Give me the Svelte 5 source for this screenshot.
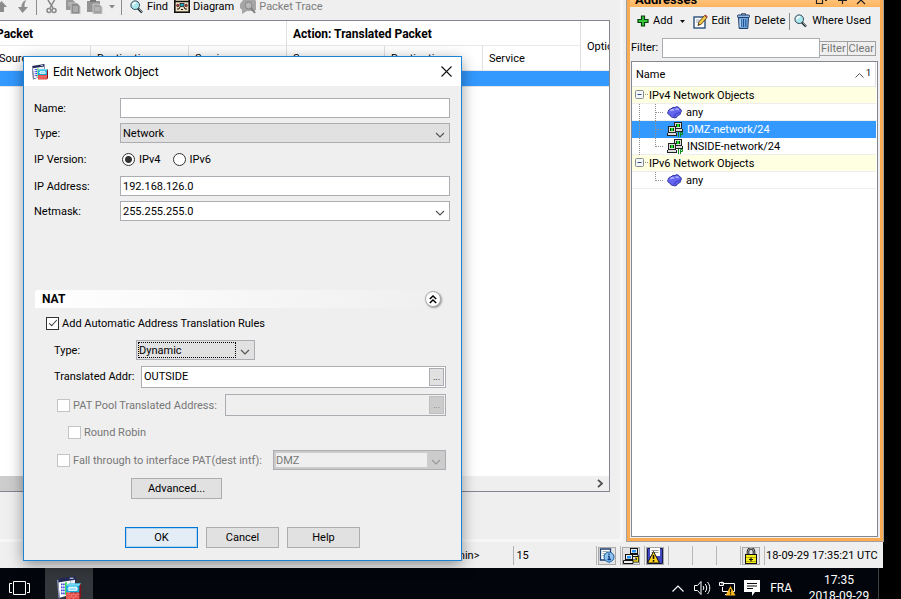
<script>
  let name = $state('');
  let version = $state('4');
  let address = $state('192.168.126.0');
  let autoNat = $state(true);
  let translated = $state('OUTSIDE');

  const tree = [
    { kind: 'group', label: 'IPv4 Network Objects' },
    { kind: 'any', label: 'any', outer: true },
    { kind: 'net', label: 'DMZ-network/24', outer: true, selected: true },
    { kind: 'net', label: 'INSIDE-network/24', outer: true, last: true },
    { kind: 'group', label: 'IPv6 Network Objects' },
    { kind: 'any', label: 'any', last: true }
  ];
</script>

{#snippet asdm(size)}
  <svg width={size} height={size} viewBox="0 0 16 16" aria-hidden="true">
    <path d="M0 2 12.500 0v11L1 15.500Z" fill="#232a55" />
    <path d="M.9 4.300 9 3v9.500L1.800 14.500Z" fill="#fff" />
    <path d="M9 3l3-.5V6H9Z" fill="#e9ecf5" />
    <path d="M0 2.500h.9L1.800 15H1Z" fill="#8d97b5" />
    <path d="M3.200 5v8M4.600 5v7.500" stroke="#2a36e0" stroke-width="1" stroke-dasharray="1.200 .8" />
    <path d="M6 4.200v8.500" stroke="#38d84a" stroke-width="1.200" />
    <path d="M8.500 1.500h2.500" stroke="#c9d0ee" stroke-width=".8" />
    <path d="M6 6.500 8 5h8l-1 1.500V11H6Z" fill="#19a9dc" />
    <path d="M6 6.500 8 5h8l-1 1.500Z" fill="#6fd9f4" />
    <path d="M8 7.500h5v2H8Z" fill="none" stroke="#d6f6ff" stroke-width=".9" />
    <path d="M7 8.500h7" stroke="#d6f6ff" stroke-width=".7" />
    <path d="M6 11h9v4.500H6Z" fill="#e2403a" />
    <path d="M15 6.500 16 5v9l-1 1.500Z" fill="#8c1117" />
    <path d="M6 12.500h9M6 14h9M8 11v1.500M11 11v1.500M14 11v1.500M9.500 12.500V14M12.500 12.500V14M8 14v1.500M11 14v1.500" stroke="#f5a09a" stroke-width=".4" />
  </svg>
{/snippet}

{#snippet magnifier()}
  <svg width="14" height="14" viewBox="0 0 14 14" aria-hidden="true">
    <path d="M8 8.500 12 12.500" stroke="#1d2b30" stroke-width="2.400" />
    <path d="M9 9 12 12" stroke="#8fa3a8" stroke-width="1" />
    <circle cx="5.200" cy="5.200" r="4.300" fill="#a9e9ee" stroke="#345" stroke-width="1" />
    <path d="M2.800 5.500A2.600 2.600 0 0 1 6 2.800" fill="none" stroke="#fff" stroke-width="1.600" />
  </svg>
{/snippet}

{#snippet chevron()}
  <svg class="chev" width="10" height="6" viewBox="0 0 10 6" aria-hidden="true">
    <path d="M1 1l4 4 4-4" fill="none" stroke="currentColor" stroke-width="1.200" />
  </svg>
{/snippet}

<div class="screen">
  <div class="app">
    <div class="body">
      <main class="main">
        <div class="toolbar">
          <svg width="8" height="14" viewBox="0 0 8 14"><path d="M-4 7 1.500 1 7 7H4v5H0V7Z" fill="#8c8c8c" /></svg>
          <svg class="down" width="14" height="14" viewBox="0 0 14 14"><path d="M9.500 0C7.500 2 7.500 4 7.500 7H11L5.500 13 1 7h3.500C4.500 4 6 1 9.500 0Z" fill="#8c8c8c" /></svg>
          <i class="sep s1"></i>
          <svg width="12" height="14" viewBox="0 0 12 14"><path d="M2 0l5 8M8.500 0 4 8" stroke="#888" stroke-width="1.500" /><circle cx="3" cy="10.500" r="2" fill="none" stroke="#888" stroke-width="1.500" /><circle cx="8" cy="10.500" r="2" fill="none" stroke="#888" stroke-width="1.500" /></svg>
          <svg class="copy" width="16" height="14" viewBox="0 0 16 14"><path d="M1 0h7l2 2v8H1Z" fill="#999" /><path d="M6 3h6l3 3v8H6Z" fill="#8c8c8c" stroke="#c8c8c8" /><path d="M8 7h5M8 9h5M8 11h5M3 3h3M3 5h2" stroke="#c8c8c8" /></svg>
          <svg class="paste" width="16" height="14" viewBox="0 0 16 14"><path d="M0 1h13v11H0Z" fill="#949494" /><path d="M3 0h6v2H3Z" fill="#777" /><path d="M6 4h6l3 3v7H6Z" fill="#a2a2a2" stroke="#c8c8c8" /><path d="M8 8h5M8 10h5" stroke="#c8c8c8" /></svg>
          <svg class="drop" width="6" height="4" viewBox="0 0 6 4"><path d="M0 0h6L3 3.500Z" fill="#888" /></svg>
          <i class="sep s2"></i>
          <button class="tool">{@render magnifier()}<span>Find</span></button>
          <button class="tool">
            <svg width="16" height="14" viewBox="0 0 16 14"><rect x=".8" y="-1" width="14.400" height="13.200" fill="#f3e3c3" stroke="#111" stroke-width="1.600" /><path d="M1 1.500h14" stroke="#111" stroke-width="1.500" /><rect x="6" y="3.500" width="4" height="3" fill="#28a9c9" stroke="#111" stroke-width=".7" /><circle cx="3.800" cy="5.500" r="1.200" fill="#c33" stroke="#111" stroke-width=".6" /><circle cx="12.200" cy="5.500" r="1.200" fill="#c33" stroke="#111" stroke-width=".6" /><path d="M3 9h2l1-2M13 9h-2l-1-2M7 9.500h2" stroke="#111" fill="none" /></svg>
            <span>Diagram</span>
          </button>
          <button class="tool off" disabled>
            <svg width="16" height="14" viewBox="0 0 16 14"><path d="M3 0h12l1 1v9l-2 1H7l-5 3v-4L0 8V4Z" fill="#a6a6a6" /><circle cx="8.500" cy="5.500" r="3.500" fill="#b8b8b8" stroke="#868686" /><path d="M11 8l4 5" stroke="#7d7d7d" stroke-width="2" /></svg>
            <span>Packet Trace</span>
          </button>
        </div>
        <div class="rules">
          <table>
            <colgroup><col /><col /><col /><col /><col /><col /><col class="opt" /></colgroup>
            <thead>
              <tr class="groups"><th class="orig" colspan="3">Packet</th><th colspan="3">Action: Translated Packet</th><td class="options" rowspan="2">Options</td></tr>
              <tr class="cols"><td>Source</td><td>Destination</td><td>Service</td><td>Source</td><td>Destination</td><td>Service</td></tr>
            </thead>
            <tbody><tr class="picked"><td colspan="7"></td></tr></tbody>
          </table>
          <div class="scroll">
            <i></i>
            <svg width="7" height="9" viewBox="0 0 7 9"><path d="M1 .8 5 4.500 1 8.200" fill="none" stroke="#505050" stroke-width="1.800" /></svg>
          </div>
        </div>
      </main>

      <aside class="side">
        <header>
          <b>Addresses</b>
          <svg width="60" height="7" viewBox="0 0 60 7"><path d="M6.500 0v3.500h6V0M15 .5h2M28 .5h9M32.500 0v4M47 4l4-4 4 4" fill="none" stroke="#222" stroke-width="1.200" /></svg>
        </header>
        <div class="tools">
          <button class="tool">
            <svg width="12" height="12" viewBox="0 0 12 12"><path d="M4.500 1h3v3.500H11v3H7.500V11h-3V7.500H1v-3h3.500Z" fill="#35c83c" stroke="#0a3f10" stroke-width="1.200" /></svg>
            <span>Add</span>
            <svg class="tri" width="5" height="3" viewBox="0 0 5 3"><path d="M0 0h5L2.500 3Z" fill="#111" /></svg>
          </button>
          <button class="tool edit">
            <svg width="15" height="15" viewBox="0 0 15 15"><rect x="1" y="3" width="11" height="11" fill="#fff" stroke="#2c4f7c" stroke-width="1.400" /><path d="M3 6h4M3 8h3" stroke="#9ab" /><path d="M5 11.500 5.800 8 11.500 1.500 14 3.500 8.500 10Z" fill="#f2c94c" stroke="#5a3b12" stroke-width=".9" /><path d="M11.500 1.500 12.500.5 14.700 2.500 14 3.500Z" fill="#b43" /><path d="M5 11.500l1-1.500.8.700Z" fill="#222" /></svg>
            <span>Edit</span>
          </button>
          <button class="tool del">
            <svg width="13" height="16" viewBox="0 0 13 16"><path d="M4.500 2V.8h4V2" fill="none" stroke="#223b66" /><rect x=".5" y="2" width="12" height="2.500" rx=".8" fill="#8fbce8" stroke="#223b66" /><path d="M1.500 4.500h10l-.7 11H2.200Z" fill="#6fa8e0" stroke="#223b66" /><path d="M4.200 6v8M6.500 6v8M8.800 6v8" stroke="#24508c" /><path d="M3.200 6v8" stroke="#d6eaff" /></svg>
            <span>Delete</span>
          </button>
          <i class="sep"></i>
          <button class="tool where">{@render magnifier()}<span>Where Used</span></button>
        </div>
        <div class="filter">
          <label for="filter">Filter:</label>
          <input id="filter" type="text" />
          <button disabled>Filter</button><button disabled>Clear</button>
        </div>
        <div class="tree">
          <div class="head">
            <span>Name</span>
            <svg width="9" height="5" viewBox="0 0 9 5"><path d="M.5 4.500l4-4 4 4" fill="none" stroke="#555" /></svg>
            <sup>1</sup>
          </div>
          {#each tree as row}
            <div class="node {row.kind}" class:selected={row.selected}>
              {#if row.kind === 'group'}
                <svg width="17" height="17" viewBox="0 0 17 17">
                  <rect x="3.500" y="3.500" width="8" height="8" rx="1" fill="#f4f6f8" stroke="#848b94" />
                  <path d="M5.500 7.500h4" stroke="#2f4d94" />
                  <path d="M13 7.500h4" stroke="#909090" stroke-dasharray="1 1" />
                </svg>
              {:else}
                <svg width="33" height="17" viewBox="0 0 33 17">
                  {#if row.outer}<path d="M7.500 0v17" stroke="#909090" stroke-dasharray="1 1" />{/if}
                  <path d={row.last ? 'M23.5 0v9' : 'M23.5 0v17'} stroke="#909090" stroke-dasharray="1 1" />
                  <path d="M24 8.500h8" stroke="#909090" stroke-dasharray="1 1" />
                </svg>
                {#if row.kind === 'any'}
                  <svg class="ico" width="15" height="13" viewBox="0 0 15 13">
                    <path d="M4 3C5.500 1 7 1.500 8 1.500 9 .3 12 .5 12.300 2.500 14.500 3 15 5.500 13.500 6.800 13.500 9 11.500 9.500 10.800 9.500 10 11.500 8 12.500 6.500 11.500 4.500 11.500 3.500 10.500 3 9 .5 8.500 0 6 1.500 5 1.500 3.500 3 3 4 3Z" fill="#6466f0" stroke="#2b2c9c" />
                    <path d="M3.500 5C4.500 3.500 6 3.500 7 4.500M8.500 3.500C9.500 2.500 11 2.800 11.300 4" fill="none" stroke="#b9bbff" stroke-width="1.400" />
                    <path d="M6.500 10.500c2-1 1.500-2.500 3-3s2.500 0 3-1.500" fill="none" stroke="#4142c8" stroke-width="1.200" />
                  </svg>
                {:else}
                  <svg class="ico" width="16" height="15" viewBox="0 0 16 15">
                    <path d="M7 0h8v7H7Z" fill="#222" /><path d="M8 1h6v5H8Z" fill="#dcdcdc" /><path d="M9 2h4v3H9Z" fill="#063d0a" /><path d="M10 2h2v3h-2Z" fill="#20e02a" />
                    <path d="M7 7h9v3H7Z" fill="#222" /><path d="M8 7h7v2H8Z" fill="#dcdcdc" />
                    <path d="M1 4h8v7H1Z" fill="#222" /><path d="M2 5h6v5H2Z" fill="#dcdcdc" /><path d="M3 6h4v3H3Z" fill="#063d0a" /><path d="M4 6h2v3H4Z" fill="#20e02a" />
                    <path d="M0 11h10v3H0Z" fill="#222" /><path d="M1 11h8v2H1Z" fill="#dcdcdc" />
                    <path d="M11.500 10v5M13.500 15v-4.500h2v2h-2" fill="none" stroke="#0c8a1a" />
                  </svg>
                {/if}
              {/if}
              <span>{row.label}</span>
            </div>
          {/each}
        </div>
      </aside>
    </div>

    <footer class="status">
      <span class="user">&lt;admin&gt;</span>
      <span class="level">15</span>
      <span class="slot"><i class="box"><svg width="16" height="16" viewBox="0 0 16 16"><path d="M1.500 1h10v11h-10Z" fill="#fff" stroke="#1c3f6e" stroke-width="1.300" /><path d="M3.500 3.500h5M3.500 5.500h4M3.500 7.500h2" stroke="#9aa" /><circle cx="10" cy="9" r="5" fill="#8cc3ef" stroke="#1f5c99" /><path d="M8 13l2.500 2.500L12 13Z" fill="#4b93d2" /><path d="M10 5.500v1.500M9 8.500h1.200v3M8.500 11.500H12" fill="none" stroke="#123f80" stroke-width="1.300" /></svg></i></span>
      <span class="slot"><i class="box"><svg width="16" height="16" viewBox="0 0 16 16"><path d="M12 9h2.500v4H9" fill="none" stroke="#111" stroke-width="3" /><path d="M12 9h2.500v4H9" fill="none" stroke="#f4df1e" stroke-width="1.400" /><rect x="7.500" y=".5" width="7" height="5" fill="#eee" stroke="#111" /><rect x="9" y="2" width="4" height="2.500" fill="#2593f5" /><path d="M6.500 6.500h8.500v2H6.500Z" fill="#eee" stroke="#111" /><rect x="2.500" y="6.500" width="7" height="5" fill="#eee" stroke="#111" /><rect x="4" y="8" width="4" height="2.500" fill="#2593f5" /><path d="M.5 12.500H10v3H.5Z" fill="#eee" stroke="#111" /></svg></i></span>
      <span class="slot"><i class="box"><svg width="16" height="16" viewBox="0 0 16 16"><path d="M.5.5h15v15H.5Z" fill="#4247c4" stroke="#14164e" /><path d="M3 0h10v8H3Z" fill="#fff" /><path d="M4.500 2.500h7M4.500 4.500h7" stroke="#9a9a9a" /><path d="M6.500 3.500 12.500 15H.5Z" fill="#ffd21c" stroke="#111" /><path d="M6.500 7v4M6.500 12v1.700" stroke="#111" stroke-width="1.600" /></svg></i></span>
      <span class="slot"></span><span class="slot"></span><span class="slot"></span>
      <span class="slot"><i class="box"><svg width="16" height="16" viewBox="0 0 16 16"><path d="M5 7V3.500a3 3 0 0 1 6 0V7" fill="none" stroke="#111" stroke-width="2.600" /><path d="M5 7V3.500a3 3 0 0 1 6 0V7" fill="none" stroke="#d8d8d8" stroke-width=".8" /><rect x="2.500" y="6.500" width="11" height="9" fill="#f5ee1b" stroke="#111" /><path d="M3 9.500h10M3 13.500h10" stroke="#b9ae10" /><path d="M8 9.500v4M6 11.500h4" stroke="#111" stroke-width="1.200" /></svg></i></span>
      <span class="slot time">18-09-29 17:35:21 UTC</span>
    </footer>
  </div>

  <div class="taskbar">
    <div class="bar">
      <svg class="view" width="21" height="14" viewBox="0 0 21 14"><path d="M4.500.5h12v13h-12ZM3 2.500H.5v9H3M18 2.500h2.500v9H18" fill="none" stroke="#fff" /></svg>
      <div class="running">{@render asdm(24)}</div>
      <div class="tray">
        <svg width="12" height="7" viewBox="0 0 12 7"><path d="M.5 6.500 6 1l5.500 5.500" fill="none" stroke="#fff" stroke-width="1.200" /></svg>
        <svg width="17" height="14" viewBox="0 0 17 14"><path d="M.5 4.500h3l3.500-4v13l-3.500-4h-3Z" fill="none" stroke="#fff" /><path d="M9 5c1 1.200 1 2.800 0 4M11.200 3c2 2.400 2 5.600 0 8M13.500 1c3 3.500 3 8.500 0 12" fill="none" stroke="#fff" /></svg>
        <svg width="17" height="15" viewBox="0 0 17 15"><path d="M5 2.500h10.500v8H3.500V6M6 13.500h4M3 .5v3M.5 1.500h4v3h-4Z" fill="none" stroke="#fff" /><path d="M11.500 5 16.500 14.500h-10Z" fill="#f9b81c" /><path d="M11.500 8v3.500M11.500 12.300v1.200" stroke="#111" stroke-width="1.200" /></svg>
        <svg width="16" height="16" viewBox="0 0 16 16"><path d="M0 0h16v12h-5l-3 4v-4H0Z" fill="#fff" /><path d="M3 3.500h10M3 6h10M3 8.500h6" stroke="#0a0d12" /></svg>
        <span class="lang">FRA</span>
        <span class="clock">17:35<br />2018-09-29</span>
      </div>
    </div>
  </div>

  <form class="dialog" onsubmit={(e) => e.preventDefault()}>
    <div class="title">
      {@render asdm(16)}
      <span>Edit Network Object</span>
      <button type="button" class="close" aria-label="Close"><svg width="11" height="11" viewBox="0 0 11 11"><path d="M.5.5l10 10M10.500.5l-10 10" stroke="#111" stroke-width="1.100" /></svg></button>
    </div>

    <div class="fields">
      <label for="name">Name:</label>
      <input id="name" type="text" bind:value={name} />
      <label for="type">Type:</label>
      <div class="pick gray"><select id="type"><option>Network</option></select>{@render chevron()}</div>
      <span>IP Version:</span>
      <div class="radios">
        <label><input type="radio" name="version" value="4" bind:group={version} />IPv4</label>
        <label><input type="radio" name="version" value="6" bind:group={version} />IPv6</label>
      </div>
      <label for="addr">IP Address:</label>
      <input id="addr" type="text" bind:value={address} />
      <label for="mask">Netmask:</label>
      <div class="pick"><select id="mask"><option>255.255.255.0</option></select>{@render chevron()}</div>
    </div>

    <section class="nat">
      <div class="bar2">
        <b>NAT</b>
        <button type="button" aria-label="Collapse NAT"><svg width="8" height="9" viewBox="0 0 8 9"><path d="M.8 4 4 1l3.200 3M.8 8 4 5l3.200 3" fill="none" stroke="#000" stroke-width="1.500" /></svg></button>
      </div>
      <label class="check auto"><input type="checkbox" bind:checked={autoNat} /><span>Add Automatic Address Translation Rules</span></label>
      <div class="line">
        <label for="nattype" class="lt">Type:</label>
        <div class="pick gray focus"><select id="nattype"><option>Dynamic</option></select>{@render chevron()}</div>
      </div>
      <div class="line">
        <label for="taddr" class="la">Translated Addr:</label>
        <div class="browse"><input id="taddr" type="text" bind:value={translated} /><button type="button" aria-label="Browse translated address">...</button></div>
      </div>
      <div class="line dim">
        <label class="check pat"><input type="checkbox" disabled /><span>PAT Pool Translated Address:</span></label>
        <div class="browse"><input type="text" aria-label="PAT pool" disabled /><button type="button" disabled aria-label="Browse PAT pool">...</button></div>
      </div>
      <label class="check dim robin"><input type="checkbox" disabled /><span>Round Robin</span></label>
      <div class="line dim">
        <label class="check fall"><input type="checkbox" disabled /><span>Fall through to interface PAT(dest intf):</span></label>
        <div class="pick off"><select disabled aria-label="Destination interface"><option>DMZ</option></select>{@render chevron()}</div>
      </div>
      <button type="button" class="btn adv">Advanced...</button>
    </section>

    <div class="actions">
      <button class="btn ok">OK</button>
      <button type="button" class="btn">Cancel</button>
      <button type="button" class="btn">Help</button>
    </div>
  </form>
</div>

<style>
  :global(body) { background: #000; }
  .screen {
    position: relative; height: 100vh; overflow: hidden;
    display: flex; flex-direction: column;
    font: 11px/14px Roboto, "Noto Sans", sans-serif; color: #000;
  }
  button, input, select { font: inherit; color: inherit; margin: 0; box-sizing: border-box; }
  svg { display: block; flex: none; }
  i { font-style: normal; }
  .app { flex: 1; min-height: 0; margin-right: 18px; background: #efefef; display: flex; flex-direction: column; }
  .body { flex: 1; min-height: 0; display: flex; gap: 3px; }

  .main { flex: 1; min-width: 0; display: flex; flex-direction: column; padding-bottom: 47px; border: solid #f6f6f6; border-width: 0 3px 3px 0; }
  .toolbar { height: 20px; padding-bottom: 7px; box-sizing: border-box; display: flex; align-items: center; }
  .tool { display: flex; align-items: center; gap: 4px; padding: 0; border: 0; background: none; white-space: nowrap; }
  .tool.off { color: #7c7c7c; }
  .toolbar .tool { margin-right: 6px; gap: 3px; }
  .down { margin-left: 9px; }
  .sep { width: 1px; height: 17px; background: #8c8c8c; }
  .s1 { margin: 0 9px 0 5px; }
  .s2 { margin: 0 8px 0 6px; }
  .copy { margin-left: 7px; }
  .paste { margin: 0 6px; }
  .rules { flex: 1; min-height: 0; margin-right: 10px; background: #fff; border: solid #828790; border-width: 1px 1px 1px 0; display: flex; flex-direction: column; justify-content: space-between; overflow: hidden; }
  table { table-layout: fixed; border-collapse: separate; border-spacing: 0; width: calc(100% + 7px); margin-left: -7px; }
  .opt { width: 28px; }
  th, td { padding: 0 0 0 6px; text-align: left; overflow: hidden; white-space: nowrap; box-sizing: border-box; }
  thead th, thead td { border-right: 1px solid #e0e0e0; }
  .groups th { height: 25px; padding-top: 1px; border-bottom: 1px solid #e9e9e9; font-size: 12px; font-weight: 700; }
  .groups .orig { padding-left: 3px; }
  .cols td { height: 25px; padding-top: 2px; border-bottom: 1px solid #e9e9e9; }
  .groups .options { border-right: 0; padding-top: 2px; border-bottom: 1px solid #e9e9e9; }
  .picked td { height: 16px; padding: 0; background: #3399ff; border-bottom: 1px solid #e6e6e6; }
  .scroll { height: 15px; background: #efefef; display: flex; justify-content: space-between; align-items: center; padding-right: 5px; }
  .scroll i { width: 50%; height: 15px; background: #cdcdcd; }

  .side { width: 256px; flex: none; box-sizing: border-box; border: solid #fbab52; border-width: 0 3px 3px; outline: 1px solid #a0a0a0; margin-left: 1px; margin-bottom: 1px; display: flex; flex-direction: column; padding: 0 2px 1px 1px; }
  .side header { height: 7px; margin: 0 -2px 0 -1px; padding-left: 5px; background: linear-gradient(#ffc27a, #ffb35c); display: flex; align-items: flex-end; justify-content: space-between; overflow: hidden; }
  .side header b { font-size: 13px; line-height: 14px; }
  .side header svg { align-self: flex-start; margin-right: 10px; }
  .tools { display: flex; align-items: center; height: 28px; padding-left: 6px; }
  .tri { margin-left: 3px; }
  .edit { margin-left: 8px; }
  .del { margin-left: 7px; }
  .tools .sep { margin: 0 4px; }
  .filter { display: flex; align-items: center; height: 20px; margin-top: 3px; padding-right: 2px; }
  .filter label { margin-right: 4px; }
  .filter input { flex: 1; min-width: 0; height: 20px; border: 1px solid #abadb3; background: #fff; }
  .filter button { height: 15px; padding: 0 1px; border: solid #a0a0a0; border-width: 1px 1px 1px 0; background: #efefef; color: #757575; line-height: 13px; }
  .tree { flex: 1; margin-top: 3px; background: #fff; border: 1px solid #828790; overflow: hidden; }
  .head { height: 25px; display: flex; align-items: center; padding: 2px 4px 0; margin-right: 1px; box-sizing: border-box; border-bottom: 1px solid #e9e9e9; border-right: 1px solid #e0e0e0; }
  .head span { flex: 1; }
  .head sup { font-size: 9px; line-height: 10px; margin: 0 0 5px 2px; vertical-align: baseline; }
  .node { height: 17px; margin-right: 1px; box-sizing: border-box; border-bottom: 1px solid #eee; display: flex; align-items: center; }
  .node span { padding-top: 1px; }
  .node.group { background: #ffffe1; }
  .node.selected { background: #3399ff; color: #fff; border-bottom-color: #3399ff; }
  .ico { margin: 0 4px 0 2px; }
  .net .ico { margin-left: 2px; }

  .status { height: 25px; margin-top: 1px; display: flex; align-items: center; }
  .user, .level { box-sizing: border-box; }
  .user { flex: 512; text-align: right; padding-right: 34px; }
  .level { flex: 85; padding-left: 2px; border-left: 1px solid #b0b0b0; line-height: 19px; }
  .slot { width: 24px; height: 19px; box-sizing: border-box; border-left: 1px solid #b8b8b8; display: flex; align-items: center; padding-left: 1px; }
  .box { border: 1px solid #a8a8a8; padding: 0; background: #e4e4e4; }
  .time { width: 119px; white-space: nowrap; }

  .taskbar { height: 31px; margin-right: 22px; background: #02060c; border-right: 1px solid #3c4046; overflow: hidden; color: #fff; }
  .bar { height: 40px; display: flex; align-items: center; }
  .view { margin: 0 15px 0 9px; }
  .running { width: 48px; height: 40px; background: #34373b; display: grid; place-items: center; }
  .tray { margin-left: auto; display: flex; align-items: center; gap: 8px; }
  .tray svg:first-child { margin-right: 2px; }
  .lang { font-size: 12px; margin-left: 2px; }
  .clock { font-size: 12px; line-height: 16px; text-align: center; width: 78px; }

  .dialog { position: absolute; left: 23px; top: 56px; width: 439px; box-sizing: border-box; border: 1px solid #1883d7; background: #efefef; box-shadow: 0 4px 14px rgba(0, 0, 0, .4); }
  .title { height: 29px; background: #fff; display: flex; align-items: center; gap: 5px; padding: 0 9px 0 8px; font-size: 12px; }
  .close { margin-left: auto; padding: 0; border: 0; background: none; }
  .fields { display: grid; grid-template-columns: 81px 1fr; gap: 5px; align-items: center; padding: 12px 11px 0 10px; }
  .fields > label, .fields > span { padding-top: 1px; }
  .fields > input, .pick { height: 20px; }
  .fields > input { width: 100%; border: 1px solid #abadb3; background: #fff; padding: 0 2px; }
  .pick { position: relative; box-sizing: border-box; }
  .pick select { appearance: none; width: 100%; height: 100%; border: 1px solid #abadb3; border-radius: 0; background: #fff; padding: 1px 18px 0 2px; }
  .pick.gray select { background: #e1e1e1; }
  .chev { position: absolute; right: 5px; top: 9px; color: #555; pointer-events: none; }
  .radios { display: flex; gap: 12px; height: 23px; padding-left: 2px; }
  .radios label { display: flex; align-items: center; gap: 4px; }
  .radios input { appearance: none; width: 13px; height: 13px; border: 1px solid #333; border-radius: 50%; background: #fff; }
  .radios input:checked { background: radial-gradient(circle, #333 3px, #fff 4px); }

  .nat { padding: 69px 15px 0 11px; }
  .bar2 { height: 18px; display: flex; align-items: center; justify-content: space-between; padding-left: 7px; border-radius: 3px 0 0 0; background: linear-gradient(90deg, #fff, #efefef); }
  .bar2 b { font-size: 12px; }
  .bar2 button { width: 16px; height: 16px; padding: 0; border: 1px solid #aaa; border-radius: 50%; background: #fff; display: grid; place-items: center; margin-right: 5px; box-shadow: 1px 1px 2px #999; }
  .check { display: flex; align-items: center; gap: 3px; white-space: nowrap; }
  .check span { padding-top: 1px; }
  .check input { appearance: none; width: 13px; height: 13px; border: 1px solid #333; background: #fff; position: relative; }
  .check input:checked::after { content: ""; position: absolute; left: 4px; top: 0; width: 3px; height: 7px; border: solid #333; border-width: 0 1px 1px 0; transform: rotate(42deg); }
  .dim { color: #777; }
  .dim .check input, .dim.check input { border-color: #c4c4c4; }
  .auto { height: 14px; margin: 8px 0 10px 11px; }
  .line { display: flex; align-items: center; margin-bottom: 6px; }
  .lt, .la { padding-left: 19px; box-sizing: border-box; white-space: nowrap; }
  .lt { width: 101px; padding-top: 1px; }
  .la { width: 106px; }
  .focus { width: 119px; }
  .focus::after { content: ""; position: absolute; left: 2px; top: 2px; right: 19px; bottom: 2px; border: 1px dotted #000; pointer-events: none; }
  .browse { flex: 1; height: 22px; box-sizing: border-box; display: flex; padding: 1px; border: 1px solid #abadb3; background: #fff; }
  .browse input { flex: 1; min-width: 0; border: 0; padding: 0 1px; background: none; }
  .browse button { width: 15px; padding: 0; border: 1px solid #abadb3; background: #e1e1e1; font-size: 9px; line-height: 10px; }
  .dim .browse { background: #efefef; }
  .dim .browse button { background: #ccc; border-color: #bfbfbf; }
  .pat { width: 190px; padding-left: 22px; box-sizing: border-box; }
  .robin { height: 14px; margin: 9px 0 11px 33px; }
  .fall { width: 238px; padding-left: 22px; box-sizing: border-box; }
  .pick.off { flex: 1; background: #ccc; }
  .pick.off select { background: linear-gradient(#efefef, #efefef) 2px 2px / calc(100% - 20px) calc(100% - 4px) no-repeat #ccc; color: #777; opacity: 1; }
  .pick.off .chev { color: #999; }
  .btn { height: 21px; width: 73px; padding: 0; border: 1px solid #adadad; background: #e1e1e1; }
  .adv { display: block; width: 91px; margin: 8px 0 0 96px; }
  .ok { border: 1px solid #0078d7; box-shadow: inset 0 0 0 1px #b5d5ef; background: #e4edf6; }
  .actions { display: flex; justify-content: center; gap: 8px; padding: 28px 0 12px; }
</style>
